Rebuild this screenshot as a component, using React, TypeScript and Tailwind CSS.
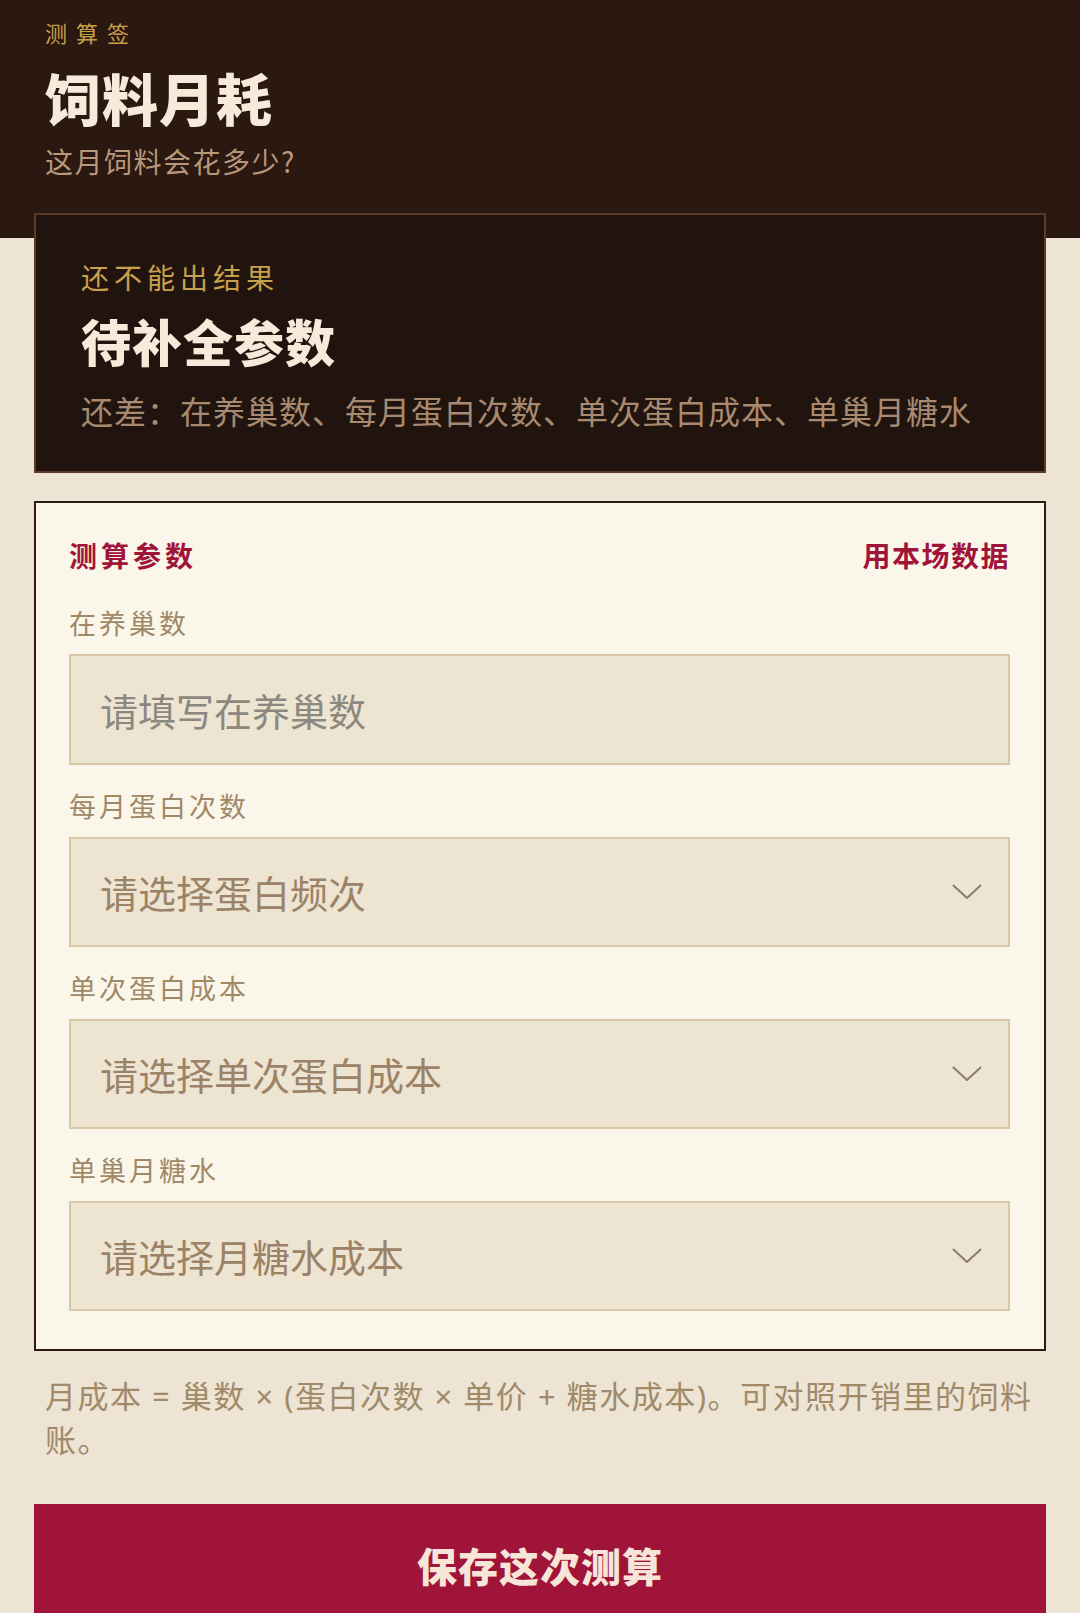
import React from "react";

function Chevron() {
  return (
    <svg width="30" height="16" viewBox="0 0 30 16" fill="none" className="shrink-0">
      <polyline points="1.5,1.5 15,14 28.5,1.5" stroke="#8a7c6a" strokeWidth="2" strokeLinecap="round" strokeLinejoin="round" />
    </svg>
  );
}

function Field({ label, children }: { label: string; children: React.ReactNode }) {
  return (
    <div className="flex flex-col">
      <div className="text-[27px] leading-[34px] tracking-[3px] text-[#a08866]">{label}</div>
      <div className="mt-[14px]">{children}</div>
    </div>
  );
}

function SelectBox({ text }: { text: string }) {
  return (
    <div className="flex h-[110px] items-center justify-between border-2 border-[#d8c8a8] bg-[#ede4d2] pl-[29px] pr-[26px]">
      <span className="text-[38px] leading-[48px] text-[#9c8266]">{text}</span>
      <Chevron />
    </div>
  );
}

export default function App() {
  return (
    <div className="min-h-screen bg-[#ede4d3] font-['Noto_Sans_CJK_SC','Noto_Sans',sans-serif]">
      <header className="bg-[#2b1810] px-[45px] pt-[18px] pb-[59px]">
        <div className="text-[22px] leading-[28px] tracking-[9px] text-[#c8a04a]">测算签</div>
        <h1 className="mt-[17px] text-[56px] font-black leading-[67px] tracking-[1px] text-[#f6eadb]">饲料月耗</h1>
        <p className="mt-[13px] text-[28px] leading-[36px] tracking-[1.5px] text-[#b8977a]">这月饲料会花多少?</p>
      </header>

      <section className="relative mx-[34px] -mt-[25px] border-2 border-[#5c3a28] bg-[#21140e] pl-[45px] pr-[30px] pt-[44px] pb-[41px]">
        <div className="text-[28px] leading-[36px] tracking-[5px] text-[#c8a04a]">还不能出结果</div>
        <div className="mt-[15px] text-[50px] font-black leading-[60px] tracking-[1px] text-[#f6eadb]">待补全参数</div>
        <div className="mt-[20px] text-[32px] leading-[40px] tracking-[1px] text-[#a88a70]">
          还差：在养巢数、每月蛋白次数、单次蛋白成本、单巢月糖水
        </div>
      </section>

      <section className="mx-[34px] mt-[28px] border-2 border-[#2b1b12] bg-[#fbf6ea] pl-[33px] pr-[34px] pt-[34px] pb-[38px]">
        <div className="flex items-center justify-between">
          <div className="text-[28px] font-bold leading-[36px] tracking-[4px] text-[#a0143a]">测算参数</div>
          <div className="text-[28px] font-bold leading-[36px] tracking-[1.5px] text-[#a0143a]">用本场数据</div>
        </div>
        <div className="mt-[33px] flex flex-col gap-[24px]">
          <Field label="在养巢数">
            <input
              className="block h-[111px] w-full border-2 border-[#d8c8a8] bg-[#ede4d2] pl-[29px] text-[38px] text-[#4a3a2a] outline-none placeholder:text-[#8c8880]"
              placeholder="请填写在养巢数"
            />
          </Field>
          <Field label="每月蛋白次数">
            <SelectBox text="请选择蛋白频次" />
          </Field>
          <Field label="单次蛋白成本">
            <SelectBox text="请选择单次蛋白成本" />
          </Field>
          <Field label="单巢月糖水">
            <SelectBox text="请选择月糖水成本" />
          </Field>
        </div>
      </section>

      <p className="mx-[45px] mt-[23px] font-['Noto_Sans','Noto_Sans_CJK_SC',sans-serif] text-[31px] leading-[44px] tracking-[1.5px] text-[#a08a6a]">
        月成本 = 巢数 × (蛋白次数 × 单价 + 糖水成本)。可对照开销里的饲料账。
      </p>

      <button className="mx-[34px] mt-[42px] flex h-[122px] w-[1012px] items-center justify-center bg-[#a0143a] text-[40px] font-black leading-[48px] tracking-[1px] text-[#f7e6d8]">
        保存这次测算
      </button>
    </div>
  );
}
